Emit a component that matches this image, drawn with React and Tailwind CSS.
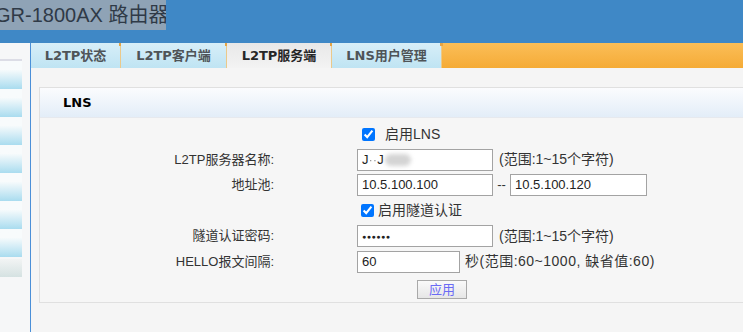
import React from 'react';

const tabs = [
  { label: 'L2TP状态', w: 'w-[90px]' },
  { label: 'L2TP客户端', w: 'w-[106px]' },
  { label: 'L2TP服务端', w: 'w-[105px]', active: true },
  { label: 'LNS用户管理', w: 'w-[110px]' },
];

const font = 'font-["Liberation_Sans","Noto_Sans_CJK_SC",sans-serif]';
const boldFont = 'font-["DejaVu_Sans","Noto_Sans_CJK_SC",sans-serif] font-bold';

function Label({ children }) {
  return <div className="w-[235px] shrink-0 text-right pr-[1px]">{children}</div>;
}

function TextBox({ w = 'w-[136px]', children }) {
  return (
    <div className={`${w} h-[22px] border border-[#a3a3a3] bg-white flex items-center px-[4px] text-[13px] text-[#222]`}>
      {children}
    </div>
  );
}

function Check({ label, gap }) {
  return (
    <label className={`flex items-center ml-[4px] ${gap}`}>
      <input type="checkbox" defaultChecked className="w-[13px] h-[13px] m-0 accent-[#0075ff]" />
      <span className="text-[14px]">{label}</span>
    </label>
  );
}

export default function App() {
  return (
    <div className={`w-[743px] h-[332px] overflow-hidden flex flex-col bg-[#f5f5f5] ${font}`}>
      {/* Header */}
      <div className="h-[43px] shrink-0 bg-[#3f88c6]">
        <div className="w-[166px] h-[30px] bg-[#8fa3b6] flex items-center overflow-hidden">
          <span className="-ml-[5px] text-[20px] text-[#2f3a47] whitespace-nowrap leading-none">GR-1800AX 路由器</span>
        </div>
      </div>

      <div className="flex flex-1 min-h-0">
        {/* Sidebar */}
        <div className="w-[31px] shrink-0 bg-[#f6f7f8] border-r border-[#4a8fd8] pt-[16px]">
          <div className="w-[22px] border-t-2 border-[#dcdde6]">
            {[0, 1, 2, 3, 4, 5, 6].map(i => (
              <div key={i} className="h-[28px] bg-gradient-to-b from-[#f8fbfc] from-30% to-[#a9dcef]" />
            ))}
            <div className="h-[18px] mt-[2px] bg-gradient-to-b from-[#f2f4f4] to-[#d5e2e2]" />
          </div>
        </div>

        {/* Main */}
        <div className="flex-1 flex flex-col min-w-0 overflow-hidden">
          <div className="h-[25px] shrink-0 flex">
            {tabs.map(t => (
              <div
                key={t.label}
                className={`${t.w} relative shrink-0 flex items-center justify-center text-[13px] border-r border-[#ebc98a] ${boldFont} ${
                  t.active
                    ? 'bg-gradient-to-b from-[#e8e8e8] to-[#f3f3f3] text-[#262626]'
                    : 'bg-gradient-to-b from-[#d7eef8] to-[#bfe4f3] text-[#4f5458]'
                }`}
              >
                {t.label}
                <span className="absolute -right-[2px] top-0 w-[3px] h-[3px] bg-[#e5a444]" />
              </div>
            ))}
            <div className="flex-1 bg-gradient-to-b from-[#fbbe57] to-[#f5ab35]" />
          </div>

          <div className="flex-1 pl-[8px] pt-[19px] bg-[#f5f5f5]">
            <div className="-mr-[20px] border border-[#e0e0e0] bg-[#f6f6f6]">
              <div className="h-[30px] flex items-center pl-[23px] bg-gradient-to-b from-[#fbfcfe] to-[#e3edf8] border-b border-[#e6e9ee]">
                <span className={`text-[13px] text-black ${boldFont}`}>LNS</span>
              </div>

              <div className="pt-[3px] pb-[3px] text-[13px] text-[#333]">
                <div className="h-[26px] flex items-center">
                  <Label />
                  <div className="ml-[82px]">
                    <Check label="启用LNS" gap="gap-[10px] ml-[5px]" />
                  </div>
                </div>
                <div className="h-[25px] flex items-center">
                  <Label>L2TP服务器名称:</Label>
                  <div className="ml-[82px] flex items-center gap-[6px]">
                    <TextBox>
                      <span>J</span>
                      <span className="text-[#999] blur-[0.6px]">··</span>
                      <span>J</span>
                      <span className="ml-[1px] w-[26px] h-[12px] rounded-[6px] bg-[#d4d4d4] blur-[2px]" />
                    </TextBox>
                    <span className="text-[14px]">(范围:1~15个字符)</span>
                  </div>
                </div>
                <div className="h-[26px] flex items-center">
                  <Label>地址池:</Label>
                  <div className="ml-[82px] flex items-center">
                    <TextBox>10.5.100.100</TextBox>
                    <span className="w-[17px] text-center">--</span>
                    <TextBox w="w-[137px]">10.5.100.120</TextBox>
                  </div>
                </div>
                <div className="h-[25px] flex items-center">
                  <Label />
                  <div className="ml-[82px]">
                    <Check label="启用隧道认证" gap="gap-[4px]" />
                  </div>
                </div>
                <div className="h-[26px] flex items-center">
                  <Label>隧道认证密码:</Label>
                  <div className="ml-[82px] flex items-center gap-[6px]">
                    <TextBox>
                      <span className="text-[7px] tracking-[0.5px] leading-none">●●●●●●</span>
                    </TextBox>
                    <span className="text-[14px]">(范围:1~15个字符)</span>
                  </div>
                </div>
                <div className="h-[25px] flex items-center">
                  <Label>HELLO报文间隔:</Label>
                  <div className="ml-[82px] flex items-center gap-[5px]">
                    <TextBox w="w-[103px]">60</TextBox>
                    <span className="text-[14px] tracking-[0.5px]">秒(范围:60~1000, 缺省值:60)</span>
                  </div>
                </div>
                <div className="h-[25px] flex items-end pl-[377px]">
                  <button className="w-[50px] h-[19px] border border-[#a9a9a9] bg-gradient-to-b from-[#fafafa] to-[#e6e6e6] text-[13px] text-[#6b6bf5] leading-none">
                    应用
                  </button>
                </div>
              </div>
            </div>
          </div>
        </div>
      </div>
    </div>
  );
}
